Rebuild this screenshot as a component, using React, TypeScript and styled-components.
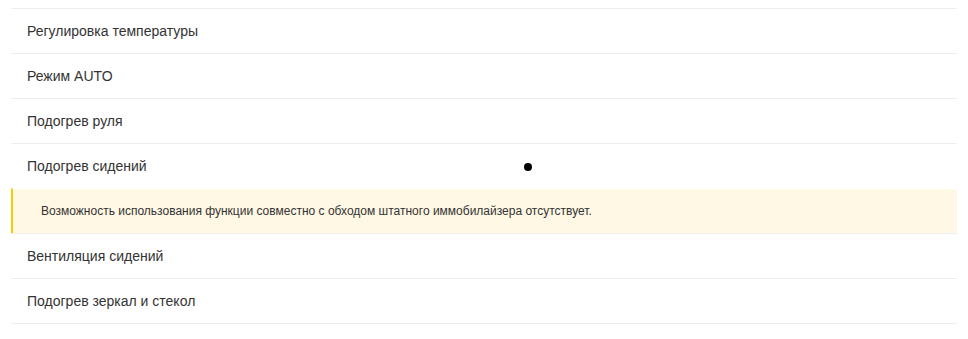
import styled, { createGlobalStyle } from "styled-components";

const GlobalStyle = createGlobalStyle`
  body {
    margin: 8px;
    font-family: "Liberation Sans", Arial, sans-serif;
    color: #333;
    background: #fff;
  }
`;

interface Option {
  title: string;
  warning?: string;
}

const options: Option[] = [
  { title: "Регулировка температуры" },
  { title: "Режим AUTO" },
  { title: "Подогрев руля" },
  {
    title: "Подогрев сидений",
    warning:
      "Возможность использования функции совместно с обходом штатного иммобилайзера отсутствует.",
  },
  { title: "Вентиляция сидений" },
  { title: "Подогрев зеркал и стекол" },
];

const App = () => {
  return (
    <>
      <GlobalStyle />
      <List>
        {options.map((option) => (
          <Group key={option.title}>
            <Row>
              {option.title}
              {option.warning && <Dot />}
            </Row>
            {option.warning && <Warning>{option.warning}</Warning>}
          </Group>
        ))}
      </List>
    </>
  );
};

export default App;

const List = styled.div`
  margin: 0 3px;
  border-bottom: 1px solid #eeeeee;
`;

const Group = styled.div`
  display: flex;
  flex-direction: column;
`;

const Row = styled.div`
  position: relative;
  display: flex;
  align-items: center;
  height: 44px;
  padding: 0 16px;
  border-top: 1px solid #eeeeee;
  font-size: 14px;
  color: #333;
`;

const Dot = styled.span`
  position: absolute;
  left: 513px;
  top: 19px;
  width: 8px;
  height: 8px;
  border-radius: 50%;
  background: #000;
`;

const Warning = styled.div`
  display: flex;
  align-items: center;
  height: 44px;
  padding: 0 28px;
  border-top: 1px solid #ffffff;
  border-left: 2px solid #ffc800;
  background: #fff8e5;
  font-size: 12px;
  color: #333;
`;
